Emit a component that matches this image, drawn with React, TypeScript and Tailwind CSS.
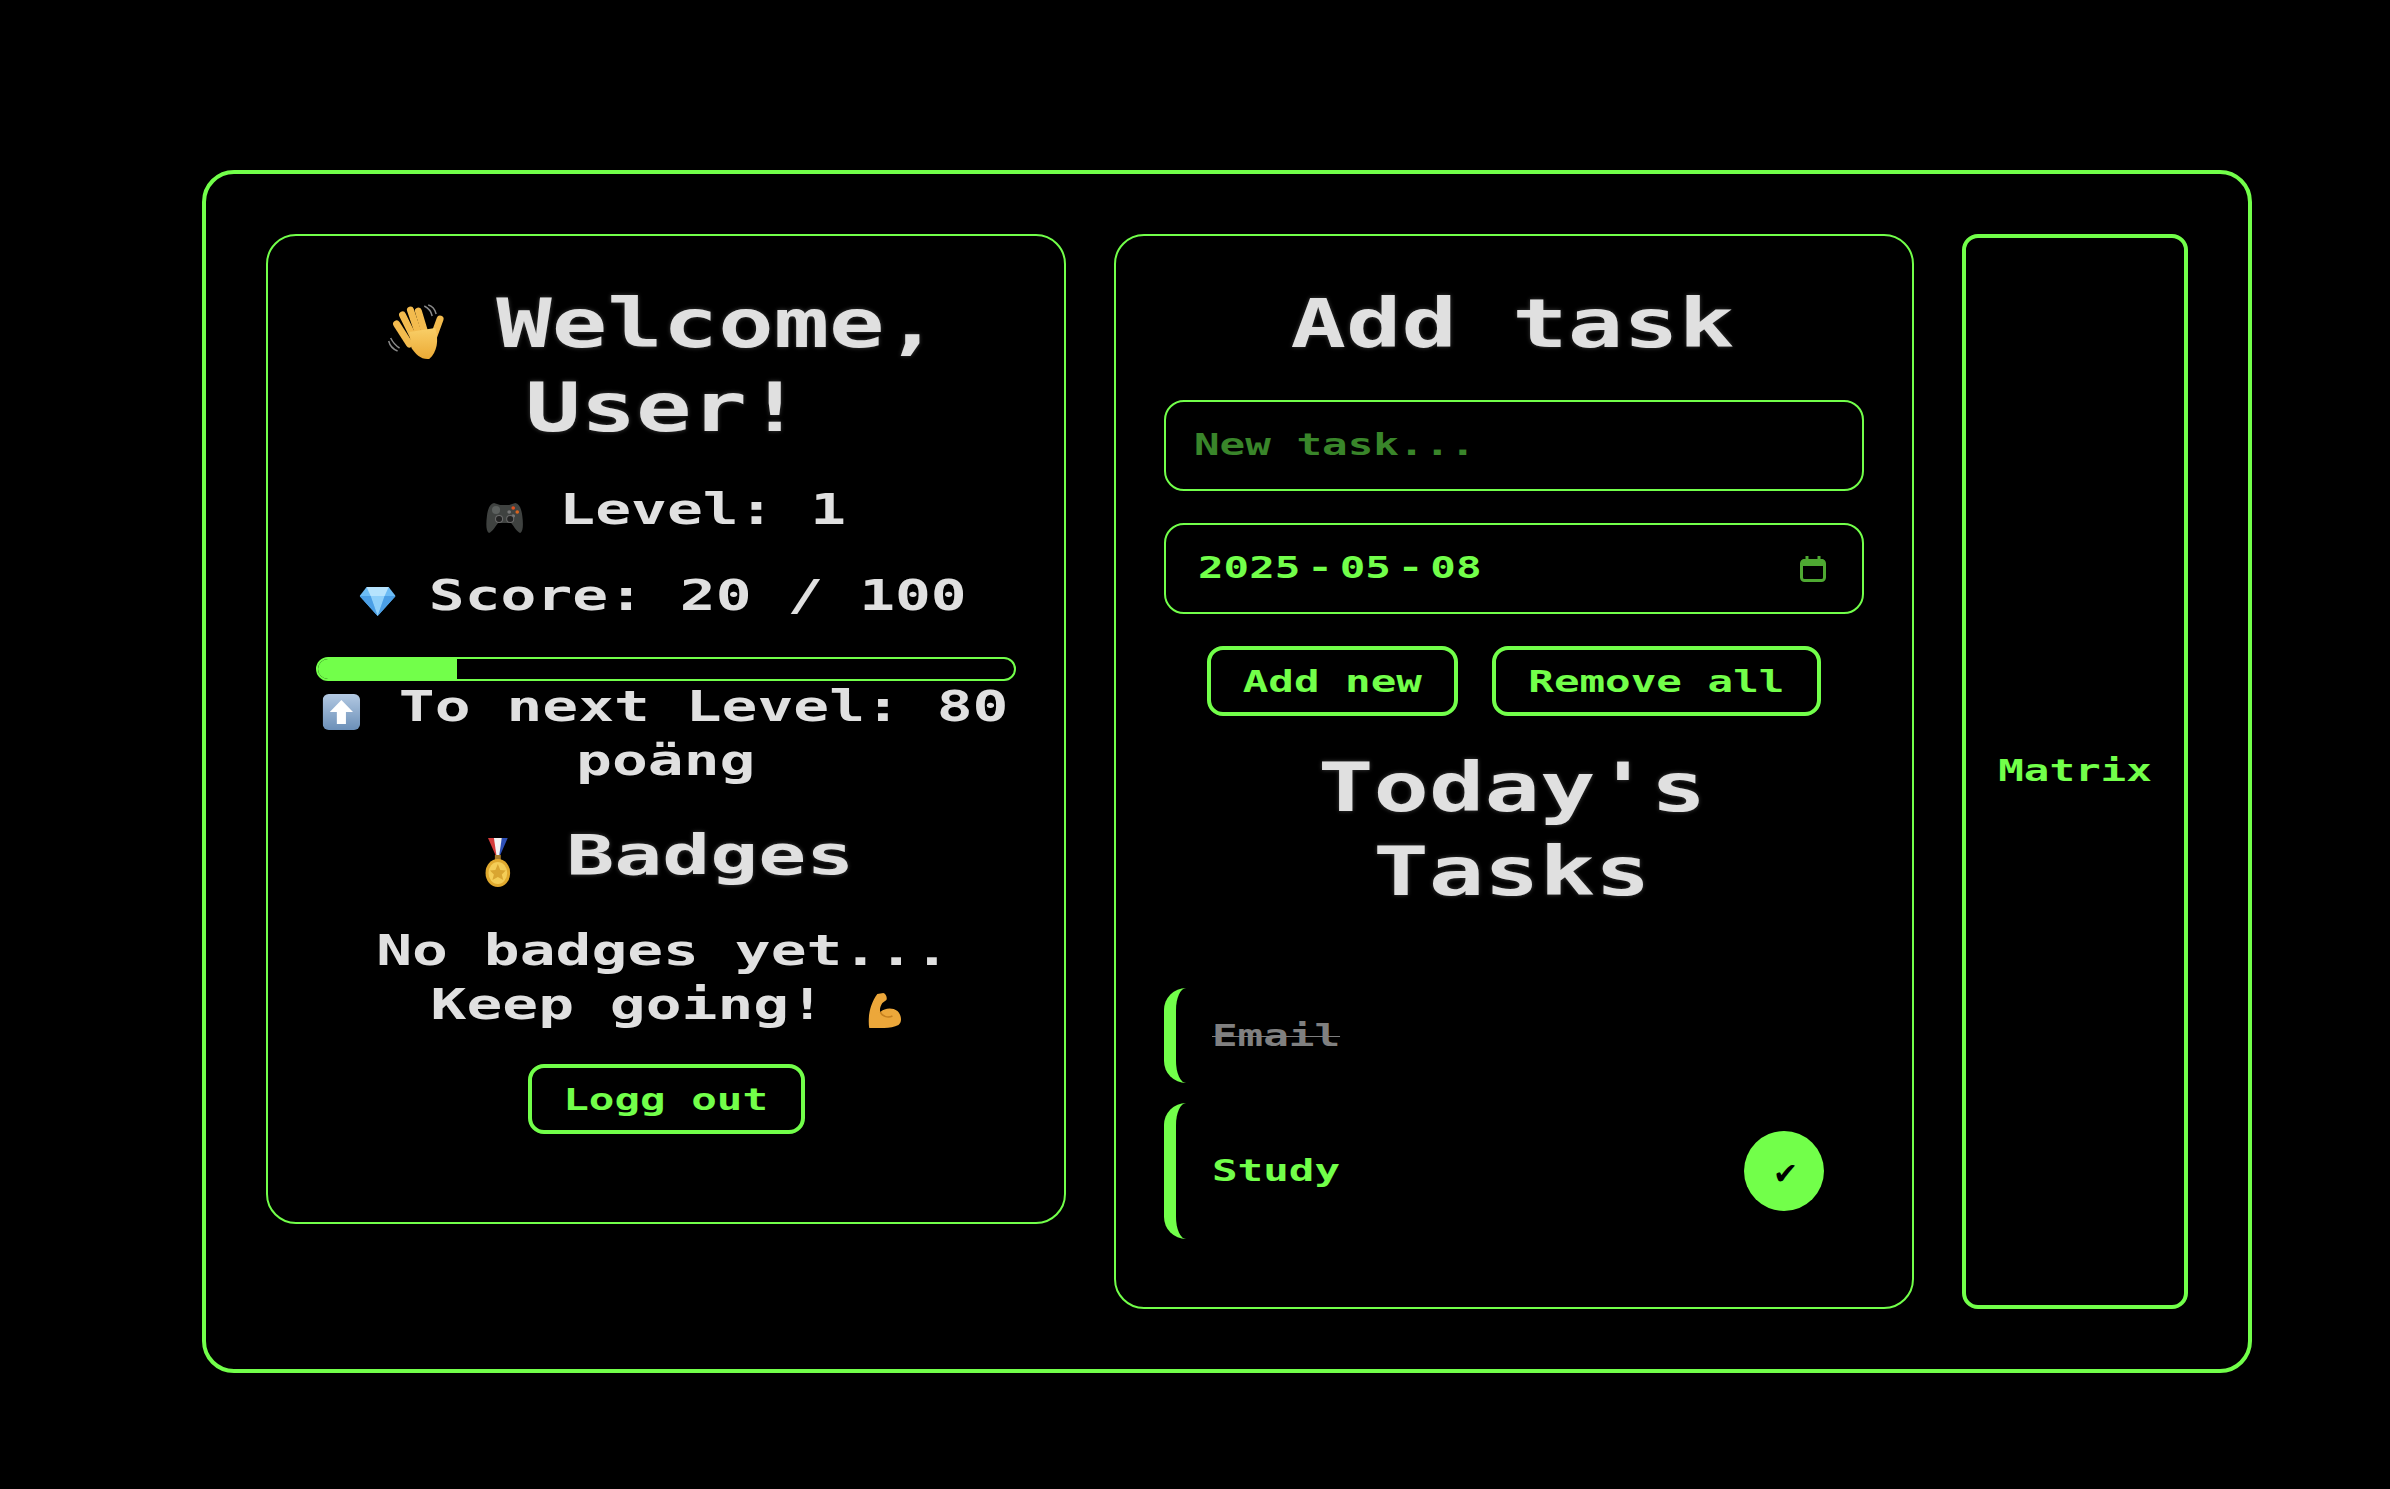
import React from "react";

const Wave = () => (
  <svg width="41" height="56" viewBox="0 0 57 56" preserveAspectRatio="none" className="mr-[38px] inline-block align-[-13px]">
    <defs>
      <linearGradient id="hand" x1="0" y1="0" x2="0" y2="1">
        <stop offset="0" stopColor="#f9cf68" />
        <stop offset="1" stopColor="#ecaa35" />
      </linearGradient>
    </defs>
    <g stroke="#f3bb4e" strokeWidth="7" strokeLinecap="round" fill="none">
      <path d="M9 20 L22 40" />
      <path d="M15 11 L27 35" />
      <path d="M23 6 L32 32" />
      <path d="M31 7 L38 30" />
      <path d="M53 15 L46 34" />
    </g>
    <path d="M22 28 L48 24 C52 36 50 48 42 55 C34 56 28 50 24 44 Z" fill="url(#hand)" />
    <g stroke="#8a8a8a" strokeWidth="1.5" fill="none">
      <path d="M37 2 C41 4 44 7 45 12" />
      <path d="M41 1 C45 2 48 6 49 10" />
      <path d="M1 37 C2 41 5 45 10 47" />
      <path d="M3 34 C5 38 7 41 12 44" />
    </g>
  </svg>
);

const Pad = () => (
  <svg width="27" height="31" viewBox="0 0 37 31" preserveAspectRatio="none" className="mr-[26px] inline-block align-[-9px]">
    <path d="M8 1 L14 3 H23 L29 1 C33 2 35 6 36 14 C37 22 37 29 34 31 C31 30 28 25 25 21 H12 C9 25 6 30 3 31 C0 29 0 22 1 14 C2 6 4 2 8 1 Z" fill="#3f4240" />
    <circle cx="10" cy="8" r="4" fill="#5c605e" />
    <circle cx="27" cy="6" r="1.8" fill="#e2501f" />
    <circle cx="31" cy="10" r="1.8" fill="#d9641f" />
    <circle cx="23" cy="10" r="1.8" fill="#777" />
    <circle cx="27" cy="14" r="1.8" fill="#777" />
    <circle cx="13" cy="17" r="3.5" fill="#222" stroke="#6a6a6a" />
    <circle cx="24" cy="17" r="3.5" fill="#222" stroke="#6a6a6a" />
  </svg>
);

const Gem = () => (
  <svg width="26" height="29" viewBox="0 0 36 29" preserveAspectRatio="none" className="mr-[24px] inline-block align-[-6px]">
    <path d="M7 0 H29 L36 9 L18 29 L0 9 Z" fill="#6cbcf5" />
    <path d="M7 0 L11 9 H25 L29 0 Z" fill="#b6e3fd" />
    <path d="M11 9 L18 29 L25 9 Z" fill="#8fd0fa" />
    <path d="M0 9 H11 L18 29 Z" fill="#4b9fe6" />
    <path d="M36 9 H25 L18 29 Z" fill="#4b9fe6" />
  </svg>
);

const Up = () => (
  <svg width="27" height="36" viewBox="0 0 37 36" preserveAspectRatio="none" className="mr-[28px] inline-block align-[-9px]">
    <defs>
      <linearGradient id="upb" x1="0" y1="0" x2="0" y2="1">
        <stop offset="0" stopColor="#b3c9e2" />
        <stop offset="1" stopColor="#6b8fb8" />
      </linearGradient>
    </defs>
    <rect x="0" y="0" width="37" height="36" rx="6" fill="url(#upb)" />
    <path d="M18.5 6 L30 18 H23 V30 H14 V18 H7 Z" fill="#fff" />
  </svg>
);

const Medal = () => (
  <svg width="18" height="49" viewBox="0 0 26 49" preserveAspectRatio="none" className="mr-[39px] inline-block align-[-13px]">
    <path d="M3 0 H9 L15 18 H11 Z" fill="#d33a3a" />
    <path d="M23 0 H17 L12 18 H15 Z" fill="#2d4fb5" />
    <path d="M9 0 H17 L14 20 H12 Z" fill="#f4f4f4" />
    <rect x="10" y="17" width="6" height="6" fill="#a5792a" />
    <ellipse cx="13" cy="35" rx="12.5" ry="14" fill="#e0a92e" />
    <ellipse cx="13" cy="35" rx="9.5" ry="11" fill="#f4cd57" />
    <path d="M13 26 L15.5 32 L21 32.5 L17 36.5 L18.5 42 L13 39 L7.5 42 L9 36.5 L5 32.5 L10.5 32 Z" fill="#d9a531" />
  </svg>
);

const Arm = () => (
  <svg width="24" height="35" viewBox="0 0 33 35" preserveAspectRatio="none" className="ml-[31px] inline-block align-[-9px]">
    <path d="M9 1 L15 0 C18 1 19 5 18 7 L14 10 C12 13 11 17 12 19 C16 15 24 14 29 18 C33 22 34 29 30 32 C22 36 10 35 1 35 C-1 25 2 10 9 1 Z" fill="#eca73a" />
    <path d="M12 19 C14 24 20 25 24 23" stroke="#c47f1f" strokeWidth="1.5" fill="none" />
  </svg>
);

const Calendar = () => (
  <svg width="26" height="26" viewBox="0 0 26 26" className="shrink-0">
    <rect x="1.5" y="4.5" width="23" height="20" rx="3" fill="none" stroke="#4ea832" strokeWidth="3" />
    <path d="M1 7 C1 4.500 3 3 5 3 H21 C23 3 25 4.500 25 7 V10 H1 Z" fill="#4ea832" />
    <rect x="5.500" y="0" width="3" height="5" fill="#4ea832" />
    <rect x="17.500" y="0" width="3" height="5" fill="#4ea832" />
  </svg>
);

const H1 = ({ children }: { children: React.ReactNode }) => (
  <div className="flex justify-center pr-[4px]">
    <span className="block origin-center scale-x-[1.375] whitespace-pre text-[67px] leading-[84px] font-bold text-[#e0e0e0] [text-shadow:0_0_4px_rgba(255,255,255,0.25)]">
      {children}
    </span>
  </div>
);

const P = ({ children, className = "" }: { children: React.ReactNode; className?: string }) => (
  <div className={`flex justify-center ${className}`}>
    <span className="block origin-center scale-x-[1.385] whitespace-pre text-[43px] leading-[54px] font-bold text-[#e0e0e0]">
      {children}
    </span>
  </div>
);

const Btn = ({ children, className }: { children: string; className: string }) => (
  <button className={`flex h-[70px] items-center justify-center rounded-[16px] border-4 border-[#72ff4a] bg-black ${className}`}>
    <span className="block origin-center scale-x-[1.372] whitespace-pre text-center text-[31px] leading-[38px] font-bold text-[#72ff4a]">
      {children}
    </span>
  </button>
);

export default function App() {
  return (
    <div className="min-h-screen bg-black pl-[202px] pt-[170px] font-['DejaVu_Sans_Mono',monospace]">
      <div className="flex w-[2050px] items-stretch gap-12 rounded-[32px] border-4 border-[#72ff4a] p-[60px]">
        <section className="w-[800px] self-start rounded-[30px] border-2 border-[#72ff4a] px-12 pt-[46px] pb-[88px]">
          <H1>
            <Wave />
            Welcome,
          </H1>
          <H1>User!</H1>
          <P className="mt-[32px]">
            <Pad />
            Level: 1
          </P>
          <P className="mt-[32px] pr-[5px]">
            <Gem />
            Score: 20 / 100
          </P>
          <div className="mt-[35px] h-[24px] overflow-hidden rounded-full border-2 border-[#72ff4a]">
            <div className="h-full w-[20%] bg-[#72ff4a]" />
          </div>
          <P className="-mt-[2px]">
            <Up />
            To next Level: 80
          </P>
          <P>poäng</P>
          <div className="mt-[32px] flex justify-center pl-[8px]">
            <span className="block origin-center scale-x-[1.424] whitespace-pre text-[56px] leading-[72px] font-bold text-[#e0e0e0] [text-shadow:0_0_4px_rgba(255,255,255,0.25)]">
              <Medal />
              Badges
            </span>
          </div>
          <P className="mt-[32px] pr-[6px]">No badges yet...</P>
          <P>
            Keep going!
            <Arm />
          </P>
          <div className="mt-[33px] flex justify-center">
            <Btn className="w-[277px]">Logg out</Btn>
          </div>
        </section>

        <section className="w-[800px] rounded-[30px] border-2 border-[#72ff4a] px-12 pt-[46px] pb-[68px]">
          <H1>Add task</H1>
          <div className="mt-[34px] flex h-[91px] items-center rounded-[20px] border-2 border-[#72ff4a] pb-[2px] pl-[28px]">
            <input
              placeholder="New task..."
              className="w-[480px] origin-left scale-x-[1.372] bg-transparent text-[31px] font-bold text-[#72ff4a] outline-none placeholder:text-[#39852a]"
            />
          </div>
          <div className="mt-[32px] flex h-[91px] items-center justify-between rounded-[20px] border-2 border-[#72ff4a] pr-[36px] pl-[32px]">
            <span className="mb-[4px] block origin-left scale-x-[1.372] whitespace-pre text-[31px] leading-[38px] font-bold text-[#72ff4a]">
              2025<span className="mx-[5px]">-</span>05<span className="mx-[5px]">-</span>08
            </span>
            <Calendar />
          </div>
          <div className="mt-[32px] flex justify-center gap-[34px]">
            <Btn className="w-[251px]">Add new</Btn>
            <Btn className="w-[329px]">Remove all</Btn>
          </div>
          <div className="mt-[30px]">
            <H1>Today's</H1>
            <H1>Tasks</H1>
          </div>
          <ul className="mt-[74px] flex flex-col gap-5">
            <li className="flex items-center rounded-[22px] border-l-[12px] border-[#72ff4a] py-7 pl-[36px]">
              <span className="block origin-left scale-x-[1.372] whitespace-pre text-[31px] leading-[39px] font-bold text-[#808080] line-through decoration-1">
                Email
              </span>
            </li>
            <li className="flex items-center justify-between rounded-[22px] border-l-[12px] border-[#72ff4a] py-7 pr-[40px] pl-[36px]">
              <span className="mb-[2px] block origin-left scale-x-[1.372] whitespace-pre text-[31px] leading-[39px] font-bold text-[#72ff4a]">
                Study
              </span>
              <button className="flex h-20 w-20 items-center justify-center rounded-full bg-[#72ff4a] pt-[4px] pl-[3px] font-['DejaVu_Sans',sans-serif] text-[30px] text-black italic">
                ✔
              </button>
            </li>
          </ul>
        </section>

        <aside className="flex w-[226px] items-center justify-center rounded-[16px] border-4 border-[#72ff4a]">
          <span className="mb-[2px] block origin-center scale-x-[1.372] whitespace-pre text-[31px] leading-[39px] font-bold text-[#72ff4a]">
            Matrix
          </span>
        </aside>
      </div>
    </div>
  );
}
